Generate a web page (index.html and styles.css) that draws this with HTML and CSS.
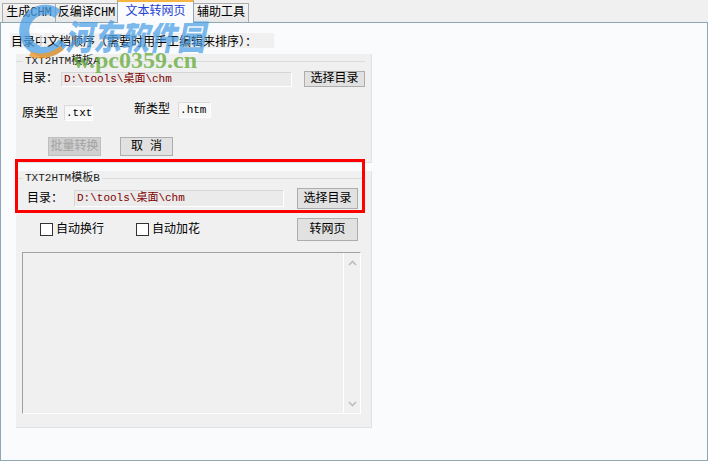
FILE: index.html
```html
<!DOCTYPE html>
<html lang="zh-CN">
<head>
    <meta charset="UTF-8">
    <title>文本转网页</title>
    <link rel="stylesheet" href="styles.css">
</head>
<body>
    <div class="window">
        <div class="tabs">
            <div class="tab tab-gen">生成CHM</div>
            <div class="tab tab-decomp">反编译CHM</div>
            <div class="tab tab-text active">文本转网页</div>
            <div class="tab tab-tools">辅助工具</div>
        </div>

        <div class="page">
            <div class="order-label">目录中文档顺序（需要时用手工编辑来排序）：</div>

            <div class="panel panel-a">
                <div class="legend-row"><span class="legend">TXT2HTM模板A</span></div>
                <div class="row dir-a">
                    <span class="lbl lbl-a">目录：</span>
                    <div class="field-path path-a">D:\tools\桌面\chm</div>
                    <button class="btn btn-dir">选择目录</button>
                </div>
                <div class="row type-row">
                    <span class="lbl type-old">原类型</span>
                    <div class="field-ext ext-old">.txt</div>
                    <span class="lbl type-new">新类型</span>
                    <div class="field-ext ext-new">.htm</div>
                </div>
                <div class="row action-row">
                    <button class="btn btn-act btn-batch" disabled>批量转换</button>
                    <button class="btn btn-act btn-cancel">取 消</button>
                </div>
            </div>

            <div class="panel panel-b">
                <div class="legend-row"><span class="legend">TXT2HTM模板B</span></div>
                <div class="row dir-b">
                    <span class="lbl lbl-b">目录：</span>
                    <div class="field-path path-b">D:\tools\桌面\chm</div>
                    <button class="btn btn-dir btn-dir-b">选择目录</button>
                </div>
                <div class="row check-row">
                    <span class="check"></span><span class="check-text">自动换行</span>
                    <span class="check check-2"></span><span class="check-text">自动加花</span>
                    <button class="btn btn-go">转网页</button>
                </div>
                <div class="memo">
                    <div class="memo-body"></div>
                    <div class="scrollbar">
                        <svg width="9" height="6" viewBox="0 0 9 6"><path d="M1 5 L4.5 1.5 L8 5" stroke="#bdbdbd" stroke-width="1.6" fill="none"/></svg>
                        <svg width="9" height="6" viewBox="0 0 9 6"><path d="M1 1 L4.5 4.5 L8 1" stroke="#bdbdbd" stroke-width="1.6" fill="none"/></svg>
                    </div>
                </div>
            </div>
        </div>

        <!-- watermark and red annotation lie over the form -->
        <div class="watermark">
            <svg class="wm-logo" width="60" height="56" viewBox="0 0 60 56">
                <path d="M46 10 A21 21 0 1 0 51 38" stroke="#4a9fe4" stroke-width="10" fill="none" opacity=".75"/>
                <path d="M22 27 L38 27 M30 27 L30 43" stroke="#ffffff" stroke-width="4" fill="none" opacity=".7"/>
                <path d="M18 50 Q34 56 50 44" stroke="#f39a2b" stroke-width="5" fill="none" opacity=".8"/>
            </svg>
            <span class="wm-name">河东软件园</span>
            <span class="wm-url">w.pc0359.cn</span>
        </div>
        <div class="highlight"></div>
    </div>
</body>
</html>
```

FILE: styles.css
```css
body {
    margin: 0;
    background: #f0f0f0;
    font-family: "Liberation Mono", "Noto Sans CJK SC", monospace;
    font-size: 12px;
    color: #000;
}
.window {
    position: relative;
    width: 708px;
    height: 461px;
    overflow: hidden;
}
.tabs {
    display: flex;
    align-items: flex-end;
    height: 22px;
    padding-left: 2px;
}
.tab {
    box-sizing: border-box;
    height: 19px;
    margin-right: -1px;
    border: 1px solid #acacac;
    border-bottom: none;
    background: linear-gradient(#f4f4f4, #e7e7e7);
    text-align: center;
    line-height: 18px;
    white-space: nowrap;
}
.tab.active {
    position: relative;
    z-index: 1;
    height: 23px;
    margin-bottom: -1px;
    border-color: #8fa7b4;
    border-top: 2px solid #f6b443;
    background: #fafbfd;
    color: #1f3fd2;
    line-height: 20px;
}
.tab-gen { width: 54px; }
.tab-decomp { width: 63px; }
.tab-text { width: 77px; }
.tab-tools { width: 56px; }

.page {
    box-sizing: border-box;
    height: 439px;
    border: 1px solid #8fa7b4;
    background: #fafbfd;
}
.order-label {
    width: 263px;
    height: 15px;
    margin: 10px 0 0 9px;
    padding-left: 1px;
    background: #f0f0f0;
    font-family: "Noto Sans CJK SC", sans-serif;
    line-height: 15px;
    white-space: nowrap;
}
.panel {
    box-sizing: border-box;
    width: 356px;
    margin-left: 15px;
    background: #f0f0f0;
    border-right: 1px solid #e2e2e2;
    border-bottom: 1px solid #e2e2e2;
}
.panel-a {
    height: 109px;
    margin-top: 6px;
}
.panel-b {
    height: 257px;
    margin-top: 8px;
}
.legend-row {
    display: flex;
    align-items: center;
    height: 14px;
}
.legend-row::before {
    content: "";
    width: 7px;
    border-top: 1px solid #dcdcdc;
}
.legend-row::after {
    content: "";
    flex: 1;
    border-top: 1px solid #dcdcdc;
    margin-right: 6px;
}
.legend {
    padding: 0 2px;
    font-size: 11px;
    line-height: 14px;
    color: #222;
}
.row {
    display: flex;
    align-items: center;
}
.lbl {
    line-height: 14px;
    white-space: nowrap;
}
.btn {
    box-sizing: border-box;
    padding: 0;
    border: 1px solid #adadad;
    background: #e1e1e1;
    font: inherit;
    color: #000;
    line-height: 14px;
}
.btn:disabled {
    border-color: #bfbfbf;
    background: #d0d0d0;
    color: #a3a3a3;
}
.field-path {
    box-sizing: border-box;
    padding-left: 2px;
    border: 1px solid;
    border-color: #d6d6d6 #ffffff #ffffff #d6d6d6;
    background: #ebebeb;
    color: #800000;
    font-size: 11px;
    white-space: nowrap;
}

/* template A */
.dir-a {
    height: 16px;
    margin-top: 3px;
}
.lbl-a {
    width: 39px;
    margin-left: 6px;
}
.path-a {
    width: 231px;
    height: 15px;
    line-height: 13px;
}
.btn-dir {
    width: 61px;
    height: 16px;
    margin-left: 12px;
}
.type-row {
    align-items: flex-start;
    height: 25px;
    margin-top: 15px;
}
.type-old {
    margin: 5px 0 0 6px;
}
.type-new {
    margin: 1px 0 0 41px;
}
.field-ext {
    box-sizing: border-box;
    height: 16px;
    padding-left: 1px;
    border: 1px solid;
    border-color: #dadada #ffffff #ffffff #dadada;
    background: #f7f7f7;
    font-size: 11px;
    line-height: 14px;
}
.ext-old {
    width: 29px;
    margin: 3px 0 0 6px;
}
.ext-new {
    width: 33px;
    margin-left: 8px;
}
.action-row {
    margin-top: 10px;
}
.btn-act {
    width: 53px;
    height: 19px;
}
.btn-batch {
    margin-left: 32px;
}
.btn-cancel {
    margin-left: 19px;
}

/* template B */
.dir-b {
    height: 21px;
    margin-top: 3px;
}
.lbl-b {
    width: 47px;
    margin-left: 11px;
}
.path-b {
    width: 210px;
    height: 17px;
    line-height: 15px;
}
.btn-dir-b {
    height: 21px;
    margin-left: 13px;
}
.check-row {
    height: 23px;
    margin-top: 9px;
}
.check {
    box-sizing: border-box;
    width: 13px;
    height: 13px;
    margin-left: 24px;
    border: 1px solid #333;
    background: #fff;
}
.check-2 {
    margin-left: 32px;
}
.check-text {
    margin-left: 3px;
    line-height: 14px;
}
.btn-go {
    width: 61px;
    height: 23px;
    margin-left: auto;
    margin-right: 13px;
}
.memo {
    display: flex;
    box-sizing: border-box;
    width: 339px;
    height: 162px;
    margin: 11px 0 0 6px;
    border: 1px solid;
    border-color: #a0a0a0 #ffffff #ffffff #a0a0a0;
}
.memo-body {
    flex: 1;
}
.scrollbar {
    display: flex;
    flex-direction: column;
    justify-content: space-between;
    align-items: center;
    width: 16px;
    padding: 7px 0 6px;
    border-left: 1px solid #ffffff;
}

/* overlays */
.watermark {
    position: absolute;
    left: 6px;
    top: 3px;
    pointer-events: none;
}
.wm-logo {
    position: absolute;
    left: 6px;
    top: 1px;
}
.wm-name {
    position: absolute;
    left: 59px;
    top: 13px;
    font-family: "Noto Sans CJK SC", sans-serif;
    font-size: 28px;
    font-weight: 900;
    font-style: italic;
    line-height: 30px;
    white-space: nowrap;
    color: rgba(74, 158, 228, 0.72);
    transform: scaleY(1.25);
    transform-origin: left top;
}
.wm-url {
    position: absolute;
    left: 67px;
    top: 43px;
    font-family: "Liberation Serif", serif;
    font-size: 24px;
    font-weight: bold;
    line-height: 28px;
    white-space: nowrap;
    color: rgba(96, 170, 52, 0.75);
}
.highlight {
    position: absolute;
    left: 15px;
    top: 159px;
    box-sizing: border-box;
    width: 350px;
    height: 54px;
    border: 3px solid #ff0000;
}
```
